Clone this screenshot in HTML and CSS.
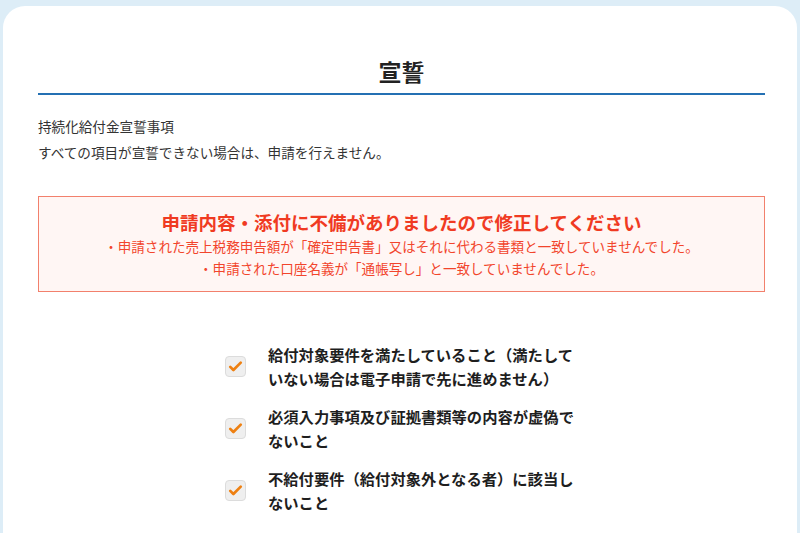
FILE: index.html
```html
<!DOCTYPE html>
<html lang="ja">
<head>
    <meta charset="UTF-8">
    <meta name="viewport" content="width=device-width, initial-scale=1.0">
    <title>宣誓</title>
    <link rel="stylesheet" href="styles.css">
</head>
<body>
    <div class="card">
        <h1 class="page-title">宣誓</h1>

        <div class="intro">
            <p>持続化給付金宣誓事項</p>
            <p>すべての項目が宣誓できない場合は、申請を行えません。</p>
        </div>

        <div class="error-box">
            <h2>申請内容・添付に不備がありましたので修正してください</h2>
            <p>・申請された売上税務申告額が「確定申告書」又はそれに代わる書類と一致していませんでした。</p>
            <p>・申請された口座名義が「通帳写し」と一致していませんでした。</p>
        </div>

        <ul class="pledges">
            <li>
                <span class="check">
                    <svg viewBox="0 0 20 20" width="15" height="15"><path d="M3 10.5l4.2 4.2L17 4.8" fill="none" stroke="#ee8012" stroke-width="3.6" stroke-linecap="round" stroke-linejoin="round"/></svg>
                </span>
                <span class="label">給付対象要件を満たしていること（満たしていない場合は電子申請で先に進めません）</span>
            </li>
            <li>
                <span class="check">
                    <svg viewBox="0 0 20 20" width="15" height="15"><path d="M3 10.5l4.2 4.2L17 4.8" fill="none" stroke="#ee8012" stroke-width="3.6" stroke-linecap="round" stroke-linejoin="round"/></svg>
                </span>
                <span class="label">必須入力事項及び証拠書類等の内容が虚偽でないこと</span>
            </li>
            <li>
                <span class="check">
                    <svg viewBox="0 0 20 20" width="15" height="15"><path d="M3 10.5l4.2 4.2L17 4.8" fill="none" stroke="#ee8012" stroke-width="3.6" stroke-linecap="round" stroke-linejoin="round"/></svg>
                </span>
                <span class="label">不給付要件（給付対象外となる者）に該当しないこと</span>
            </li>
        </ul>
    </div>
</body>
</html>
```

FILE: styles.css
```css
body {
    font-family: "Noto Sans CJK JP", "Noto Sans", sans-serif;
    background-color: #ddedf7;
    color: #222;
    margin: 0;
    padding: 6px 3px 0;
}

.card {
    background-color: #fff;
    border-radius: 22px 22px 0 0;
    padding: 49px 32px 30px 35px;
    min-height: 500px;
}

.page-title {
    font-size: 23px;
    line-height: 32px;
    font-weight: bold;
    text-align: center;
    margin: 0;
    padding-bottom: 6px;
    border-bottom: 2px solid #2470b3;
}

.intro {
    margin-top: 18px;
    font-size: 13.6px;
    line-height: 26px;
    color: #333;
}

.intro p {
    margin: 0;
}

.error-box {
    margin-top: 31px;
    border: 1px solid #f2806c;
    background-color: #fff6f4;
    padding: 12px 10px;
    text-align: center;
    color: #f2452c;
}

.error-box h2 {
    margin: 0;
    font-size: 18.5px;
    line-height: 26px;
    font-weight: bold;
    color: #f03a22;
}

.error-box p {
    margin: 0;
    font-size: 13.55px;
    line-height: 22px;
}

.pledges {
    list-style-type: none;
    width: 358px;
    margin: 50px auto 0;
    padding: 0 0 0 5px;
}

.pledges li {
    display: flex;
    align-items: center;
    gap: 22px;
    margin-bottom: 14px;
}

.check {
    flex: none;
    width: 21px;
    height: 21px;
    box-sizing: border-box;
    border: 1px solid #dcdcdc;
    border-radius: 4px;
    background-color: #efefef;
    display: flex;
    align-items: center;
    justify-content: center;
}

.label {
    width: 315px;
    font-size: 15.3px;
    line-height: 24px;
    font-weight: bold;
    color: #1e1e1e;
}
```
